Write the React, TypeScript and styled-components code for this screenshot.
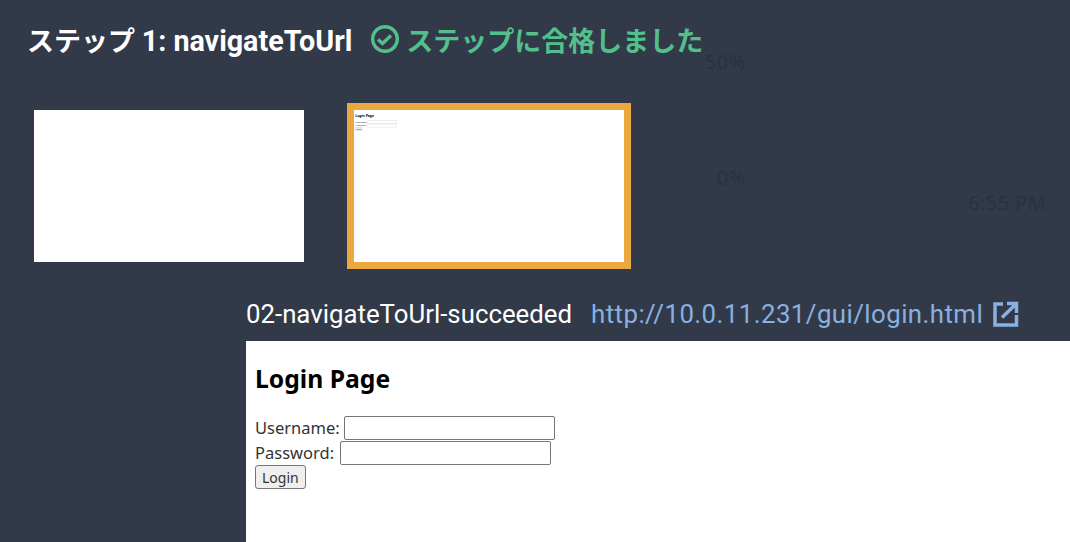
import styled, { createGlobalStyle } from 'styled-components';

const GlobalStyle = createGlobalStyle`
  html, body {
    margin: 0;
    height: 100%;
    background: #323a49;
    overflow: hidden;
  }
  #root {
    height: 100%;
  }
`;

const Modal = styled.div`
  position: relative;
  box-sizing: border-box;
  height: 542px;
  overflow: hidden;
  background: #323a49;
  color: #fff;
  font-family: Roboto, "Noto Sans CJK JP", sans-serif;
`;

/* the dimmed chart that shows through behind the dialog */
const GhostLine = styled.div<{ $x: number }>`
  position: absolute;
  top: 0;
  left: ${({ $x }) => $x}px;
  width: 1px;
  height: 100%;
  background: #2f3745;
`;

const GhostLabel = styled.span<{ $x: number; $y: number }>`
  position: absolute;
  left: ${({ $x }) => $x}px;
  top: ${({ $y }) => $y}px;
  font-family: "Noto Sans", sans-serif;
  font-size: 20px;
  line-height: 24px;
  letter-spacing: 0.4px;
  color: #2a313e;
`;

const GhostAxis = styled.div`
  position: absolute;
  left: 770px;
  right: 0;
  top: 175px;
  height: 1px;
  background: #2f3745;
`;

const GhostTick = styled.div`
  position: absolute;
  left: 1006px;
  top: 176px;
  width: 1px;
  height: 14px;
  background: #2f3745;
`;

const Content = styled.div`
  position: relative;
  display: flex;
  flex-direction: column;
`;

const Header = styled.div`
  display: flex;
  align-items: center;
  height: 40px;
  margin: 19px 0 0 27px;
`;

const StepTitle = styled.h2`
  margin: 0;
  font-size: 27px;
  font-weight: 700;
  white-space: nowrap;
`;

const TitleLatin = styled.span`
  font-size: 28.7px;
`;

const StepStatus = styled.div`
  display: flex;
  align-items: center;
  gap: 7px;
  margin-left: 19px;
  font-size: 27px;
  font-weight: 700;
  color: #52c08a;
  white-space: nowrap;
`;

const Thumbs = styled.div`
  display: flex;
  gap: 36px;
  margin: 44px 0 0 27px;
`;

const Thumb = styled.div<{ $selected?: boolean }>`
  width: 270px;
  height: 152px;
  overflow: hidden;
  background: #fff;
  border: 7px solid ${({ $selected }) => ($selected ? '#eba83f' : 'transparent')};
  background-clip: padding-box;
`;

const ThumbScale = styled.div`
  width: 1942px;
  transform: scale(0.139);
  transform-origin: 0 0;
`;

const Detail = styled.div`
  display: flex;
  flex-direction: column;
  margin: 27px 0 0 246px;
`;

const DetailHeader = styled.div`
  display: flex;
  align-items: center;
  height: 36px;
  margin-bottom: 9px;
  font-size: 25.8px;
  white-space: nowrap;
`;

const ShotName = styled.span`
  color: #fff;
`;

const ShotLink = styled.a`
  display: flex;
  align-items: center;
  gap: 10px;
  margin-left: 19px;
  letter-spacing: 0.45px;
  color: #89b0e0;
  text-decoration: none;
`;

const Page = styled.div`
  height: 201px;
  padding: 8px 9px;
  background: #fff;
  color: #333;
  font-family: "Noto Sans", sans-serif;
  font-size: 16.5px;
  line-height: 25px;
`;

const PageTitle = styled.h1`
  margin: 14px 0 20px;
  font-size: 24.7px;
  line-height: 32px;
  font-weight: 700;
  color: #000;
`;

const Field = styled.div<{ $gap: number }>`
  display: flex;
  align-items: center;
  gap: ${({ $gap }) => $gap}px;
  height: 25px;
`;

const TextInput = styled.input`
  box-sizing: border-box;
  width: 211px;
  height: 24px;
  padding: 1px 2px;
  border: 1px solid #767676;
  border-radius: 2px;
  background: #fff;
`;

const LoginButton = styled.button`
  display: block;
  box-sizing: border-box;
  height: 24px;
  padding: 0 6px;
  border: 1px solid #767676;
  border-radius: 3px;
  background: #efefef;
  color: #333;
  font-family: inherit;
  font-size: 14px;
`;

function LoginPage() {
  return (
    <Page>
      <PageTitle>Login Page</PageTitle>
      <Field $gap={4}>
        Username:
        <TextInput type="text" />
      </Field>
      <Field $gap={6}>
        Password:
        <TextInput type="password" />
      </Field>
      <LoginButton>Login</LoginButton>
    </Page>
  );
}

export default function App() {
  return (
    <>
      <GlobalStyle />
      <Modal>
        <GhostLine $x={602} />
        <GhostLine $x={637} />
        <GhostLabel $x={705} $y={50}>50%</GhostLabel>
        <GhostLabel $x={717} $y={166}>0%</GhostLabel>
        <GhostLabel $x={968} $y={191}>6:55 PM</GhostLabel>
        <GhostAxis />
        <GhostTick />
        <Content>
          <Header>
            <StepTitle>
              ステップ <TitleLatin>1: navigateToUrl</TitleLatin>
            </StepTitle>
            <StepStatus>
              <svg width="28" height="28" viewBox="0 0 28 28" fill="none" stroke="currentColor" strokeWidth="3.4">
                <circle cx="14" cy="14" r="12.3" />
                <path d="M7 14.5l4.5 4L20 10.5" />
              </svg>
              ステップに合格しました
            </StepStatus>
          </Header>
          <Thumbs>
            <Thumb />
            <Thumb $selected>
              <ThumbScale>
                <LoginPage />
              </ThumbScale>
            </Thumb>
          </Thumbs>
          <Detail>
            <DetailHeader>
              <ShotName>02-navigateToUrl-succeeded</ShotName>
              <ShotLink href="#">
                http://10.0.11.231/gui/login.html
                <svg width="26" height="26" viewBox="0 0 26 26" fill="none" stroke="currentColor" strokeWidth="3.5">
                  <path d="M10 3H2v21h21.5V14" />
                  <path d="M14 2.5h9.5V12M23.5 2.5L9 16.5" />
                </svg>
              </ShotLink>
            </DetailHeader>
            <LoginPage />
          </Detail>
        </Content>
      </Modal>
    </>
  );
}
